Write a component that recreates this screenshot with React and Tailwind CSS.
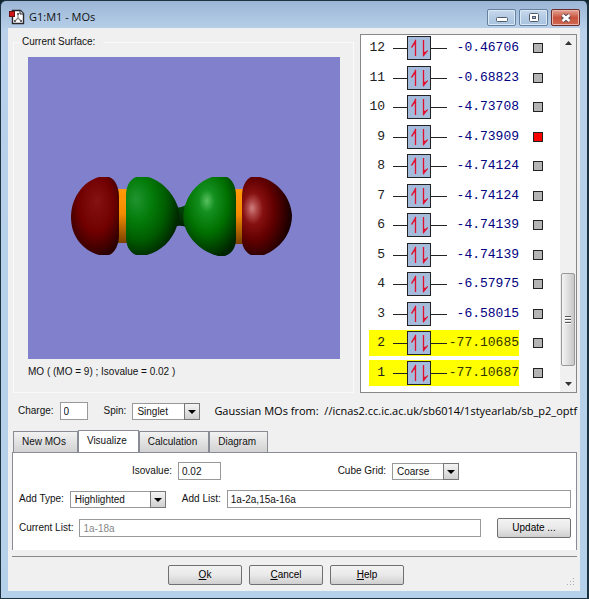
import { useState } from "react";

const orbitals = [
  { mo: 12, energy: "-0.46706" },
  { mo: 11, energy: "-0.68823" },
  { mo: 10, energy: "-4.73708" },
  { mo: 9, energy: "-4.73909" },
  { mo: 8, energy: "-4.74124" },
  { mo: 7, energy: "-4.74124" },
  { mo: 6, energy: "-4.74139" },
  { mo: 5, energy: "-4.74139" },
  { mo: 4, energy: "-6.57975" },
  { mo: 3, energy: "-6.58015" },
  { mo: 2, energy: "-77.10685" },
  { mo: 1, energy: "-77.10687" },
];

const tabs = ["New MOs", "Visualize", "Calculation", "Diagram"];

export default function App() {
  const [tab, setTab] = useState("Visualize");
  const [current, setCurrent] = useState(9);
  const [highlighted, setHighlighted] = useState([1, 2]);

  function toggleHighlight(mo) {
    setHighlighted((list) =>
      list.includes(mo) ? list.filter((n) => n !== mo) : [...list, mo]
    );
  }

  return (
    <div className="min-h-screen bg-[#10242e] font-['Liberation_Sans',sans-serif] text-[10px] leading-4 text-[#111]">
      <div className="flex min-h-screen flex-col rounded-t-md border border-r-2 border-[#1c333f] bg-linear-to-b from-[#9bb6d5] via-[#b9d1ea] via-5% to-[#b5d0ea] px-[7px] pb-[7px]">
        <TitleBar />

        <main className="flex flex-1 flex-col bg-[#f0f0f0] pt-[6px]">
          <div className="flex gap-[6px] pl-[5px] pr-[3px]">
            <Surface current={current} />
            <OrbitalList
              current={current}
              highlighted={highlighted}
              onSelect={setCurrent}
              onHighlight={toggleHighlight}
            />
          </div>

          <div className="mt-[9px] flex items-center pl-[10px]">
            <label htmlFor="charge" className="mr-[6px]">
              Charge:
            </label>
            <TextBox id="charge" value="0" className="w-7" />
            <label htmlFor="spin" className="ml-4 mr-[6px]">
              Spin:
            </label>
            <Select
              id="spin"
              options={["Singlet", "Triplet"]}
              className="w-[68px]"
            />
            <p className="ml-[14px] whitespace-pre font-['Open_Sans','Noto_Sans',sans-serif] text-[11px] text-black">
              {"Gaussian MOs from:  //icnas2.cc.ic.ac.uk/sb6014/1styearlab/sb_p2_optf"}
            </p>
          </div>

          <div role="tablist" className="mt-[10px] flex items-end pl-[5px]">
            {tabs.map((name) => (
              <Tab
                key={name}
                name={name}
                active={name === tab}
                onClick={() => setTab(name)}
              />
            ))}
          </div>

          <VisualizePanel />

          <footer className="relative ml-1 mr-[3px] mt-[6px] flex flex-1 items-start justify-center gap-[7px] border-t border-[#888] pr-[17px] pt-2">
            <PushButton>
              <u>O</u>k
            </PushButton>
            <PushButton>
              <u>C</u>ancel
            </PushButton>
            <PushButton>
              <u>H</u>elp
            </PushButton>
            <ResizeGrip />
          </footer>
        </main>
      </div>
    </div>
  );
}

function TitleBar() {
  return (
    <header className="flex h-[27px] items-start">
      <svg
        className="ml-[1px] mt-2 h-4 w-4"
        viewBox="0 0 16 16"
        aria-hidden="true"
      >
        <path
          d="M3.5 1.5h8l3 3v10h-11z"
          fill="#fff"
          stroke="#26262c"
          strokeWidth="1.4"
        />
        <path d="M11 1.5v3.5h3.5" fill="#ddd" stroke="#26262c" />
        <path
          d="M9 4.5v4.5M9 9l-3 3M9 9l3 3"
          stroke="#888"
          strokeWidth="1.2"
          fill="none"
        />
        <path
          d="M8 4h2v2h-2zM5 11h2v2h-2zM11 11h2v2h-2z"
          fill="#666"
        />
        <rect x="0.5" y="2.5" width="5" height="5" fill="#d11515" stroke="#6b1010" />
      </svg>
      <h1 className="ml-1 mt-2 font-['Open_Sans','Noto_Sans',sans-serif] text-[11px] text-[#111]">
        G1:M1 - MOs
      </h1>
      <div className="ml-auto mt-2 flex gap-[3px]">
        <button
          aria-label="Minimize"
          className="flex h-[17px] w-[29px] items-center justify-center rounded-[2px] border border-[#66809f] bg-linear-to-b from-[#c6d8ec] via-[#b4cbe4] via-50% to-[#a9c3df] shadow-[inset_0_0_0_1px_#dbe8f5]"
        >
          <svg width="12" height="12" viewBox="0 0 12 12">
            <rect x="0.5" y="5.5" width="11" height="4" rx="1" fill="#fff" stroke="#525b69" />
          </svg>
        </button>
        <button
          aria-label="Maximize"
          className="flex h-[17px] w-[29px] items-center justify-center rounded-[2px] border border-[#66809f] bg-linear-to-b from-[#c6d8ec] via-[#b4cbe4] via-50% to-[#a9c3df] shadow-[inset_0_0_0_1px_#dbe8f5]"
        >
          <svg width="12" height="12" viewBox="0 0 12 12">
            <rect x="1.5" y="1.5" width="9" height="8" rx="1" fill="#fff" stroke="#525b69" />
            <rect x="4.5" y="4.5" width="3" height="2" fill="#9fbbd9" stroke="#525b69" />
          </svg>
        </button>
        <button
          aria-label="Close"
          className="flex h-[17px] w-[29px] items-center justify-center rounded-[2px] border border-[#6b2a2c] bg-linear-to-b from-[#e3a598] via-[#c9523f] via-50% to-[#cf6a50] shadow-[inset_0_0_0_1px_#e8b5a8]"
        >
          <svg width="12" height="12" viewBox="0 0 12 12">
            <path d="M2.5 3l7 6M9.5 3l-7 6" stroke="#5a4a52" strokeWidth="4.4" />
            <path d="M2.5 3l7 6M9.5 3l-7 6" stroke="#fff" strokeWidth="2.6" />
          </svg>
        </button>
      </div>
    </header>
  );
}

function Surface({ current }) {
  return (
    <fieldset className="min-w-0 flex-1 border border-[#fafafa] pb-3 pl-[14px] pr-[13px]">
      <legend className="-ml-2 pl-[2px] pr-2">Current Surface:</legend>
      <svg
        viewBox="0 0 312 302"
        className="mt-[7px] block w-full bg-[#8080cc]"
        role="img"
        aria-label="Molecular orbital surface"
      >
        <defs>
          <radialGradient id="red1" cx="50%" cy="38%" r="66%" fx="55%" fy="30%">
            <stop offset="0" stopColor="#861212" />
            <stop offset="0.55" stopColor="#700000" />
            <stop offset="1" stopColor="#2a0000" />
          </radialGradient>
          <radialGradient id="red2" cx="28%" cy="42%" r="72%" fx="20%" fy="40%">
            <stop offset="0" stopColor="#d08080" />
            <stop offset="0.12" stopColor="#b04a4a" />
            <stop offset="0.28" stopColor="#861010" />
            <stop offset="0.55" stopColor="#620000" />
            <stop offset="1" stopColor="#140000" />
          </radialGradient>
          <radialGradient id="green1" cx="28%" cy="32%" r="78%" fx="18%" fy="28%">
            <stop offset="0" stopColor="#1f9430" />
            <stop offset="0.35" stopColor="#047c0a" />
            <stop offset="0.65" stopColor="#005c00" />
            <stop offset="1" stopColor="#001c00" />
          </radialGradient>
          <radialGradient id="green2" cx="45%" cy="32%" r="72%" fx="45%" fy="30%">
            <stop offset="0" stopColor="#58c060" />
            <stop offset="0.2" stopColor="#149020" />
            <stop offset="0.55" stopColor="#007000" />
            <stop offset="1" stopColor="#002400" />
          </radialGradient>
          <linearGradient id="bond" x1="0" y1="0" x2="0" y2="1">
            <stop offset="0" stopColor="#ff9a0a" />
            <stop offset="0.45" stopColor="#f58c00" />
            <stop offset="1" stopColor="#7a4200" />
          </linearGradient>
          <linearGradient id="neck" x1="0" y1="0" x2="0" y2="1">
            <stop offset="0" stopColor="#00500a" />
            <stop offset="1" stopColor="#001a00" />
          </linearGradient>
        </defs>
        <rect x="90" y="132" width="10" height="54" fill="url(#bond)" />
        <rect x="207" y="132" width="8" height="55" fill="url(#bond)" />
        <path
          d="M141 146C147 152 154 152 162 145L164 173C155 167 148 168 141 172Z"
          fill="url(#neck)"
        />
        <path
          d="M71 120H81C87 122 91 130 91 140V178C91 187 87 196 81 198H71C54 193 43 179 43 160C43 142 54 125 71 120Z"
          fill="url(#red1)"
        />
        <path
          d="M108 120H120C135 124 146 138 150 150C152 156 152 162 149 169C144 184 133 194 119 198H108C101 195 98 188 98 180V139C98 130 101 123 108 120Z"
          fill="url(#green1)"
        />
        <path
          d="M184 120H199C205 123 208 130 208 140V181C208 190 205 196 197 199H190C174 195 161 182 157 170C154 162 155 153 158 146C162 134 172 124 184 120Z"
          fill="url(#green2)"
        />
        <path
          d="M223 120H232C250 124 263 141 264 158C264 178 251 192 236 198H223C217 195 213 188 214 180V140C214 130 217 123 223 120Z"
          fill="url(#red2)"
        />
      </svg>
      <p className="mt-[5px]">{`MO ( (MO = ${current}) ; Isovalue = 0.02 )`}</p>
    </fieldset>
  );
}

function OrbitalList({ current, highlighted, onSelect, onHighlight }) {
  return (
    <section
      aria-label="Orbitals"
      className="flex w-[217px] shrink-0 border border-[#888] bg-white"
    >
      <ul className="flex flex-1 flex-col justify-between pb-[6px] pl-2 font-['Liberation_Mono',monospace] text-[13px]">
        {orbitals.map(({ mo, energy }) => (
          <li key={mo} className="flex items-center">
            <button
              onClick={() => onHighlight(mo)}
              className={`flex h-[26px] w-[150px] items-center ${
                highlighted.includes(mo)
                  ? "bg-[#ff0] text-[#333300]"
                  : "text-[#000080]"
              }`}
            >
              <span className="w-4 text-right text-[#222]">{mo}</span>
              <OccupiedLevel />
              <span className="flex-1 text-right">{energy}</span>
            </button>
            <input
              type="checkbox"
              aria-label={`Show MO ${mo}`}
              checked={mo === current}
              onChange={() => onSelect(mo)}
              className="ml-[14px] h-[10px] w-[10px] appearance-none border border-[#222] bg-[#b4b4b4] checked:bg-[#f00]"
            />
          </li>
        ))}
      </ul>
      <Scrollbar />
    </section>
  );
}

// energy level line with a spin up and a spin down electron
function OccupiedLevel() {
  return (
    <svg className="ml-2 h-6 w-[54px] shrink-0" viewBox="0 0 54 24" aria-hidden="true">
      <path d="M0 12.5h14M38 12.5h16" stroke="#222" />
      <rect x="14.5" y="0.5" width="23" height="23" fill="#a5bbdb" stroke="#222" />
      <path d="M22.5 20V4M30.5 4v16" stroke="#e01030" strokeWidth="1.3" />
      <path d="M23 3v5l-2 1l-2 3l-1-1z" fill="#e01030" />
      <path d="M30 21v-6l2 1l3-2v1z" fill="#e01030" />
    </svg>
  );
}

function Scrollbar() {
  return (
    <div className="flex w-4 flex-col items-center bg-[#f0f0f0]">
      <button aria-label="Scroll up" className="flex h-4 w-full items-center justify-center">
        <svg width="7" height="4" viewBox="0 0 7 4">
          <path d="M0 4L3.5 0L7 4z" fill="#333" />
        </svg>
      </button>
      <div className="flex-1" />
      <div className="flex h-[93px] w-[14px] flex-col items-center justify-center gap-[1px] rounded-[2px] border border-[#999] bg-linear-to-r from-[#f4f4f4] to-[#c8c8c8]">
        <span className="h-[2px] w-[6px] border-t border-[#555] bg-white" />
        <span className="h-[2px] w-[6px] border-t border-[#555] bg-white" />
        <span className="h-[2px] w-[6px] border-t border-[#555] bg-white" />
      </div>
      <div className="h-[10px]" />
      <button aria-label="Scroll down" className="flex h-4 w-full items-center justify-center">
        <svg width="7" height="4" viewBox="0 0 7 4">
          <path d="M0 0L3.5 4L7 0z" fill="#333" />
        </svg>
      </button>
    </div>
  );
}

function Tab({ name, active, onClick }) {
  return (
    <button
      role="tab"
      aria-selected={active}
      onClick={onClick}
      className={`border border-b-0 border-[#898c95] pl-2 pr-[11px] ${
        active
          ? "h-[22px] bg-white pb-[2px]"
          : "h-[21px] bg-linear-to-b from-[#f2f2f2] to-[#d2d2d2]"
      }`}
    >
      {name}
    </button>
  );
}

function VisualizePanel() {
  return (
    <section
      role="tabpanel"
      className="ml-1 mr-[3px] flex flex-col gap-[10px] border border-b-0 border-[#898c95] bg-white pb-3 pl-[6px] pr-[5px] pt-[9px]"
    >
      <div className="flex items-center pl-[113px] pr-[112px]">
        <label htmlFor="isovalue" className="mr-[6px]">
          Isovalue:
        </label>
        <TextBox id="isovalue" value="0.02" className="w-[43px]" />
        <label htmlFor="grid" className="ml-auto mr-[6px]">
          Cube Grid:
        </label>
        <Select
          id="grid"
          options={["Coarse", "Medium", "Fine"]}
          className="w-[67px]"
        />
      </div>

      <div className="flex items-center">
        <label htmlFor="addtype" className="mr-[6px]">
          Add Type:
        </label>
        <Select
          id="addtype"
          options={["Highlighted", "Occupied", "Virtual"]}
          className="w-24"
        />
        <label htmlFor="addlist" className="ml-4 mr-[6px]">
          Add List:
        </label>
        <TextBox id="addlist" value="1a-2a,15a-16a" className="min-w-0 flex-1" />
      </div>

      <div className="flex items-center">
        <label htmlFor="currentlist" className="mr-[6px]">
          Current List:
        </label>
        <TextBox
          id="currentlist"
          value="1a-18a"
          readOnly
          className="mr-4 min-w-0 flex-1 text-[#888]"
        />
        <PushButton>Update ...</PushButton>
      </div>
    </section>
  );
}

function TextBox({ id, value, readOnly, className }) {
  return (
    <input
      id={id}
      type="text"
      defaultValue={value}
      readOnly={readOnly}
      className={`h-[18px] border border-[#999] bg-white px-[3px] ${className}`}
    />
  );
}

function Select({ id, options, className }) {
  return (
    <div className={`relative ${className}`}>
      <select
        id={id}
        className="block h-[17px] w-full appearance-none border border-[#999] bg-white pl-1 pr-4 leading-[15px]"
      >
        {options.map((option) => (
          <option key={option}>{option}</option>
        ))}
      </select>
      <span className="pointer-events-none absolute inset-y-0 right-0 flex w-4 items-center justify-center border border-[#777] bg-linear-to-b from-[#f4f4f4] to-[#d0d0d0] pt-[2px]">
        <svg width="8" height="4" viewBox="0 0 8 4" aria-hidden="true">
          <path d="M0 0h8L4 4z" fill="#000" />
        </svg>
      </span>
    </div>
  );
}

function PushButton({ children }) {
  return (
    <button className="h-5 w-[74px] shrink-0 rounded-[2px] border border-[#707070] bg-linear-to-b from-[#f3f3f3] via-[#e9e9e9] via-50% to-[#cfcfcf] leading-none text-black">
      {children}
    </button>
  );
}

function ResizeGrip() {
  return (
    <svg
      className="absolute bottom-[5px] right-[2px]"
      width="9"
      height="9"
      viewBox="0 0 9 9"
      aria-hidden="true"
    >
      <path
        d="M7 1h1v1h-1zM4 4h1v1h-1zM7 4h1v1h-1zM1 7h1v1h-1zM4 7h1v1h-1zM7 7h1v1h-1z"
        fill="#aaa"
      />
    </svg>
  );
}
